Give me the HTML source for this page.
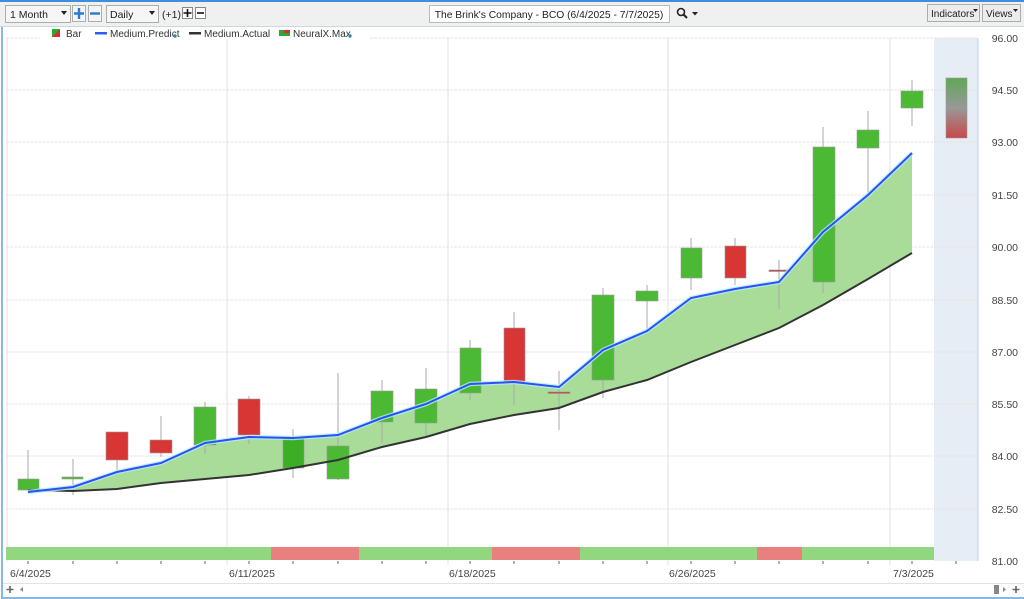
<!DOCTYPE html>
<html><head><meta charset="utf-8"><style>
html,body{margin:0;padding:0;width:1024px;height:599px;overflow:hidden;background:#fff;font-family:"Liberation Sans",sans-serif}
</style></head><body>
<svg width="1024" height="599" viewBox="0 0 1024 599" xmlns="http://www.w3.org/2000/svg" font-family="Liberation Sans, sans-serif">
<defs>
<linearGradient id="fc" x1="0" y1="0" x2="0" y2="1">
<stop offset="0" stop-color="#5fa955"/><stop offset="0.5" stop-color="#989898"/><stop offset="1" stop-color="#c84848"/>
</linearGradient>
</defs>
<!-- toolbar -->
<rect x="0" y="0" width="1024" height="27" fill="#f0f0f0"/>
<rect x="0" y="0" width="1024" height="2" fill="#3c8fd8"/>
<rect x="0" y="26" width="1024" height="1" fill="#c8d8e8"/>
<rect x="5.5" y="5.5" width="65" height="17" fill="#f6f6f6" stroke="#adadad"/>
<text x="10" y="18" font-size="10.5" fill="#222">1 Month</text>
<path d="M61 11h6l-3 4z" fill="#222"/>
<rect x="72.5" y="5.5" width="13" height="16" fill="#f4f4f4" stroke="#adadad"/>
<path d="M79 8v11M74 13.5h10" stroke="#2a7ad0" stroke-width="2.4"/>
<rect x="88.5" y="5.5" width="13" height="16" fill="#f4f4f4" stroke="#adadad"/>
<path d="M90 13.5h10" stroke="#2a7ad0" stroke-width="2.4"/>
<rect x="106.5" y="5.5" width="52" height="17" fill="#f6f6f6" stroke="#adadad"/>
<text x="110" y="18" font-size="10.5" fill="#222">Daily</text>
<path d="M149 11h6l-3 4z" fill="#222"/>
<text x="162" y="18" font-size="10.5" fill="#222">(+1)</text>
<rect x="182.5" y="7.5" width="10" height="11" fill="#fff" stroke="#888"/>
<path d="M187.5 9v8M183.5 13h8" stroke="#111" stroke-width="1.6"/>
<rect x="195.5" y="7.5" width="10" height="11" fill="#fff" stroke="#888"/>
<path d="M197 13h7" stroke="#111" stroke-width="1.6"/>
<rect x="429.5" y="5.5" width="240" height="17" fill="#fff" stroke="#bbb"/>
<text x="549" y="18" font-size="10.3" fill="#222" text-anchor="middle">The Brink's Company - BCO (6/4/2025 - 7/7/2025)</text>
<circle cx="681" cy="12" r="3.5" fill="none" stroke="#222" stroke-width="1.6"/>
<path d="M683.5 14.5l3.5 3.5" stroke="#222" stroke-width="2"/>
<path d="M692 12h6l-3 3.5z" fill="#222"/>
<rect x="927.5" y="4.5" width="52" height="17" fill="#ececec" stroke="#adadad"/>
<text x="931" y="17" font-size="10" fill="#222">Indicators</text>
<path d="M973 9h5l-2.5 3z" fill="#222"/>
<rect x="982.5" y="4.5" width="38" height="17" fill="#ececec" stroke="#adadad"/>
<text x="986" y="17" font-size="10" fill="#222">Views</text>
<path d="M1013 9h5l-2.5 3z" fill="#222"/>
<!-- frame -->
<rect x="1" y="27" width="2" height="572" fill="#8ab8e0"/>
<rect x="1" y="597" width="1023" height="2" fill="#8ab8e0"/>
<!-- forecast band -->
<rect x="934" y="38" width="44" height="523" fill="#e7edf5"/>
<line x1="978" y1="38" x2="978" y2="561" stroke="#b8d4ec"/>
<!-- grids -->
<g stroke="#e4e4e4" stroke-dasharray="3,1">
<line x1="6" y1="38" x2="978" y2="38"/><line x1="6" y1="90" x2="978" y2="90"/><line x1="6" y1="142" x2="978" y2="142"/><line x1="6" y1="195" x2="978" y2="195"/><line x1="6" y1="247" x2="978" y2="247"/><line x1="6" y1="300" x2="978" y2="300"/><line x1="6" y1="352" x2="978" y2="352"/><line x1="6" y1="404" x2="978" y2="404"/><line x1="6" y1="456" x2="978" y2="456"/><line x1="6" y1="509" x2="978" y2="509"/>
</g>
<g stroke="#e0e0e0">
<line x1="7" y1="38" x2="7" y2="561"/><line x1="227" y1="38" x2="227" y2="565"/><line x1="448" y1="38" x2="448" y2="565"/><line x1="668" y1="38" x2="668" y2="565"/><line x1="890" y1="38" x2="890" y2="565"/>
</g>
<!-- legend -->
<rect x="40" y="28" width="330" height="11" fill="#fff"/>
<path d="M52 29h8v8h-8z" fill="#2fa82f"/><path d="M60 29v8h-8z" fill="#d83030"/>
<text x="66" y="37" font-size="10" fill="#333">Bar</text>
<rect x="95" y="32" width="12" height="2.5" fill="#2f5ff0"/>
<text x="110" y="37" font-size="10" fill="#333">Medium.Predict</text>
<circle cx="175" cy="36" r="1.7" fill="#2a8aa8"/>
<rect x="189" y="32" width="12" height="2.5" fill="#333"/>
<text x="204" y="37" font-size="10" fill="#333">Medium.Actual</text>
<path d="M279 30h5v3h6v3h-11z" fill="#2fa82f"/><path d="M284 30h6v3h-6z" fill="#d83030"/>
<text x="293" y="37" font-size="10" fill="#333">NeuralX.Max</text>
<circle cx="350" cy="36" r="1.7" fill="#2a8aa8"/>
<!-- fill between -->
<polygon fill="#a8dc98" points="28,492 73,487 117,472 161,463 205,443 249,437 293,438 338,435 382,418 426,404 470,384 514,382 559,387 603,350 647,331 691,298 735,289 779,282 823,232 868,195 912,153 912,253 868,279 823,305 779,328 735,345 691,362 647,380 603,392 559,408 514,415 470,424 426,437 382,447 338,460 293,468 249,475 205,479 161,483 117,489 73,491 28,490"/>
<!-- candles wicks -->
<g stroke="#aaa" stroke-width="1">
<line x1="28" y1="450" x2="28" y2="490"/><line x1="73" y1="459" x2="73" y2="495"/><line x1="117" y1="432" x2="117" y2="472"/><line x1="161" y1="416" x2="161" y2="457"/><line x1="205" y1="402" x2="205" y2="454"/><line x1="249" y1="396" x2="249" y2="444"/><line x1="293" y1="429" x2="293" y2="478"/><line x1="338" y1="373" x2="338" y2="480"/><line x1="382" y1="380" x2="382" y2="443"/><line x1="426" y1="368" x2="426" y2="437"/><line x1="470" y1="340" x2="470" y2="400"/><line x1="514" y1="312" x2="514" y2="405"/><line x1="559" y1="371" x2="559" y2="430"/><line x1="603" y1="288" x2="603" y2="398"/><line x1="647" y1="285" x2="647" y2="330"/><line x1="691" y1="238" x2="691" y2="290"/><line x1="735" y1="238" x2="735" y2="285"/><line x1="779" y1="260" x2="779" y2="309"/><line x1="823" y1="127" x2="823" y2="293"/><line x1="868" y1="111" x2="868" y2="196"/><line x1="912" y1="80" x2="912" y2="126"/>
</g>
<g stroke="#999" stroke-width="0.6">
<rect x="18" y="479" width="21" height="11" fill="#4cb934"/>
<rect x="62" y="477" width="21" height="2" fill="#4cb934"/>
<rect x="106" y="432" width="22" height="28" fill="#d83535"/>
<rect x="150" y="440" width="22" height="13" fill="#d83535"/>
<rect x="194" y="407" width="22" height="38" fill="#4cb934"/>
<rect x="238" y="399" width="22" height="36" fill="#d83535"/>
<rect x="283" y="438" width="21" height="30" fill="#3cae26"/>
<rect x="327" y="446" width="22" height="33" fill="#4cb934"/>
<rect x="371" y="391" width="22" height="31" fill="#4cb934"/>
<rect x="415" y="389" width="22" height="34" fill="#4cb934"/>
<rect x="460" y="348" width="21" height="45" fill="#4cb934"/>
<rect x="504" y="328" width="21" height="54" fill="#d83535"/>
<rect x="548" y="392" width="22" height="1.5" fill="#d83535"/>
<rect x="592" y="295" width="22" height="85" fill="#4cb934"/>
<rect x="636" y="291" width="22" height="10" fill="#4cb934"/>
<rect x="681" y="248" width="21" height="30" fill="#4cb934"/>
<rect x="725" y="246" width="21" height="32" fill="#d83535"/>
<rect x="769" y="270" width="22" height="1.5" fill="#b84040"/>
<rect x="813" y="147" width="22" height="135" fill="#4cb934"/>
<rect x="857" y="130" width="22" height="18" fill="#4cb934"/>
<rect x="901" y="91" width="22" height="17" fill="#4cb934"/>
<rect x="946" y="78" width="21" height="60" fill="url(#fc)"/>
</g>
<!-- lines -->
<polyline fill="none" stroke="#333" stroke-width="2" points="28,490 73,491 117,489 161,483 205,479 249,475 293,468 338,460 382,447 426,437 470,424 514,415 559,408 603,392 647,380 691,362 735,345 779,328 823,305 868,279 912,253"/>
<polyline fill="none" stroke="#aef0f8" stroke-width="4.5" opacity="0.8" points="28,492 73,487 117,472 161,463 205,443 249,437 293,438 338,435 382,418 426,404 470,384 514,382 559,387 603,350 647,331 691,298 735,289 779,282 823,232 868,195 912,153"/>
<polyline fill="none" stroke="#2f4ff5" stroke-width="2" points="28,492 73,487 117,472 161,463 205,443 249,437 293,438 338,435 382,418 426,404 470,384 514,382 559,387 603,350 647,331 691,298 735,289 779,282 823,232 868,195 912,153"/>
<!-- bottom band -->
<rect x="6" y="547" width="265" height="13" fill="#92d67f"/>
<rect x="271" y="547" width="88" height="13" fill="#e88080"/>
<rect x="359" y="547" width="133" height="13" fill="#92d67f"/>
<rect x="492" y="547" width="88" height="13" fill="#e88080"/>
<rect x="580" y="547" width="177" height="13" fill="#92d67f"/>
<rect x="757" y="547" width="45" height="13" fill="#e88080"/>
<rect x="802" y="547" width="132" height="13" fill="#92d67f"/>
<!-- ticks -->
<g stroke="#666">
<line x1="28" y1="561" x2="28" y2="564"/><line x1="73" y1="561" x2="73" y2="564"/><line x1="117" y1="561" x2="117" y2="564"/><line x1="161" y1="561" x2="161" y2="564"/><line x1="205" y1="561" x2="205" y2="564"/><line x1="249" y1="561" x2="249" y2="564"/><line x1="293" y1="561" x2="293" y2="564"/><line x1="338" y1="561" x2="338" y2="564"/><line x1="382" y1="561" x2="382" y2="564"/><line x1="426" y1="561" x2="426" y2="564"/><line x1="470" y1="561" x2="470" y2="564"/><line x1="514" y1="561" x2="514" y2="564"/><line x1="559" y1="561" x2="559" y2="564"/><line x1="603" y1="561" x2="603" y2="564"/><line x1="647" y1="561" x2="647" y2="564"/><line x1="691" y1="561" x2="691" y2="564"/><line x1="735" y1="561" x2="735" y2="564"/><line x1="779" y1="561" x2="779" y2="564"/><line x1="823" y1="561" x2="823" y2="564"/><line x1="868" y1="561" x2="868" y2="564"/><line x1="912" y1="561" x2="912" y2="564"/><line x1="956" y1="561" x2="956" y2="564"/>
</g>
<g font-size="10.5" fill="#444">
<text x="10" y="577">6/4/2025</text><text x="229" y="577">6/11/2025</text><text x="449" y="577">6/18/2025</text><text x="669" y="577">6/26/2025</text><text x="893" y="577">7/3/2025</text>
</g>
<g font-size="10.5" fill="#444" text-anchor="end">
<text x="1018" y="42">96.00</text><text x="1018" y="94">94.50</text><text x="1018" y="146">93.00</text><text x="1018" y="199">91.50</text><text x="1018" y="251">90.00</text><text x="1018" y="304">88.50</text><text x="1018" y="356">87.00</text><text x="1018" y="408">85.50</text><text x="1018" y="460">84.00</text><text x="1018" y="513">82.50</text><text x="1018" y="565">81.00</text>
</g>
<!-- scrollbar row -->
<rect x="3" y="583" width="1021" height="1" fill="#e2e2e2"/>
<path d="M10 586v7M6.5 589.5h7" stroke="#666" stroke-width="1.6"/>
<path d="M23 587v5l-3-2.5z" fill="#888"/>
<rect x="994" y="585" width="5" height="9" fill="#888"/>
<path d="M1003 587v5l3-2.5z" fill="#888"/>
<path d="M1016 586v7M1012.5 589.5h7" stroke="#666" stroke-width="1.6"/>
</svg>
</body></html>
